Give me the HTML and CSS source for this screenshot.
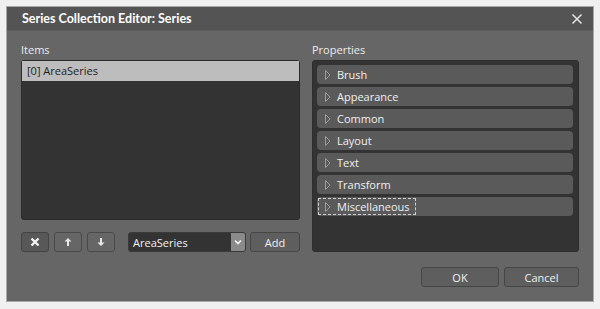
FILE: index.html
```html
<!DOCTYPE html>
<html lang="en">
<head>
<meta charset="UTF-8">
<meta name="viewport" content="width=device-width, initial-scale=1.0">
<title>Series Collection Editor</title>
<link rel="stylesheet" href="styles.css">
</head>
<body>
<div class="dialog">
    <div class="titlebar">
        <span class="title">Series Collection Editor: Series</span>
        <svg class="close" width="12" height="12" viewBox="0 0 12 12">
            <path d="M1.5 1.5 L10.5 10.5 M10.5 1.5 L1.5 10.5" stroke="#e6e6e6" stroke-width="1.5" fill="none"/>
        </svg>
    </div>

    <div class="content">
        <div class="column left">
            <div class="caption">Items</div>
            <div class="items">
                <div class="item selected">[0] AreaSeries</div>
            </div>
            <div class="toolbar">
                <button class="tool pressed" title="Remove">
                    <svg width="10" height="10" viewBox="0 0 10 10">
                        <path d="M1.5 1.5 L8.5 8.5 M8.5 1.5 L1.5 8.5" stroke="#f2f2f2" stroke-width="2.4" fill="none"/>
                    </svg>
                </button>
                <button class="tool" title="Move up">
                    <svg width="10" height="10" viewBox="0 0 10 10">
                        <path d="M5 1 L8.5 4.5 L6 4.5 L6 9 L4 9 L4 4.5 L1.5 4.5 Z" fill="#e8e8e8"/>
                    </svg>
                </button>
                <button class="tool" title="Move down">
                    <svg width="10" height="10" viewBox="0 0 10 10">
                        <path d="M5 9 L8.5 5.5 L6 5.5 L6 1 L4 1 L4 5.5 L1.5 5.5 Z" fill="#e8e8e8"/>
                    </svg>
                </button>
                <div class="combo">
                    <span class="combo-text">AreaSeries</span>
                    <span class="combo-arrow">
                        <svg width="8" height="6" viewBox="0 0 8 6">
                            <path d="M1 1.5 L4 4.5 L7 1.5" stroke="#f4f4f4" stroke-width="1.6" fill="none"/>
                        </svg>
                    </span>
                </div>
                <button class="btn add">Add</button>
            </div>
        </div>

        <div class="column right">
            <div class="caption">Properties</div>
            <div class="properties">
                <div class="category"><svg class="expander" width="6" height="10" viewBox="0 0 6 10"><path d="M0.5 0.5 L5 5 L0.5 9.5 Z" stroke="#9c9c9c" fill="none"/></svg><span class="label">Brush</span></div>
                <div class="category"><svg class="expander" width="6" height="10" viewBox="0 0 6 10"><path d="M0.5 0.5 L5 5 L0.5 9.5 Z" stroke="#9c9c9c" fill="none"/></svg><span class="label">Appearance</span></div>
                <div class="category"><svg class="expander" width="6" height="10" viewBox="0 0 6 10"><path d="M0.5 0.5 L5 5 L0.5 9.5 Z" stroke="#9c9c9c" fill="none"/></svg><span class="label">Common</span></div>
                <div class="category"><svg class="expander" width="6" height="10" viewBox="0 0 6 10"><path d="M0.5 0.5 L5 5 L0.5 9.5 Z" stroke="#9c9c9c" fill="none"/></svg><span class="label">Layout</span></div>
                <div class="category"><svg class="expander" width="6" height="10" viewBox="0 0 6 10"><path d="M0.5 0.5 L5 5 L0.5 9.5 Z" stroke="#9c9c9c" fill="none"/></svg><span class="label">Text</span></div>
                <div class="category"><svg class="expander" width="6" height="10" viewBox="0 0 6 10"><path d="M0.5 0.5 L5 5 L0.5 9.5 Z" stroke="#9c9c9c" fill="none"/></svg><span class="label">Transform</span></div>
                <div class="category"><span class="focus"><svg class="expander" width="6" height="10" viewBox="0 0 6 10"><path d="M0.5 0.5 L5 5 L0.5 9.5 Z" stroke="#9c9c9c" fill="none"/></svg><span class="label">Miscellaneous</span></span></div>
            </div>
        </div>
    </div>

    <div class="footer">
        <button class="btn ok">OK</button>
        <button class="btn cancel">Cancel</button>
    </div>
</div>
</body>
</html>
```

FILE: styles.css
```css
body {
    margin: 0;
    background-color: #f0f0f0;
    font-family: "Open Sans", "Noto Sans", sans-serif;
    font-size: 11px;
    color: #f0f0f0;
}
.dialog {
    margin: 6px 0 0 6px;
    width: 586px;
    height: 294px;
    border: 1px solid #a8a8a8;
    background-color: #666666;
    display: flex;
    flex-direction: column;
}
.titlebar {
    height: 24px;
    background-color: #545454;
    border-bottom: 1px solid #5c5c5c;
    display: flex;
    align-items: center;
    justify-content: space-between;
    padding: 0 10px 0 15px;
    box-sizing: border-box;
}
.title {
    font-family: Lato, "Open Sans", sans-serif;
    font-weight: bold;
    font-size: 12.5px;
    color: #ffffff;
}
.close {
    display: block;
}
.content {
    display: grid;
    grid-template-columns: 279px 267px;
    column-gap: 12px;
    padding: 10px 14px 0 14px;
}
.column {
    display: flex;
    flex-direction: column;
}
.caption {
    height: 19px;
    line-height: 17px;
    color: #ececec;
}
.items {
    height: 158px;
    background-color: #333333;
    border: 1px solid #2b2b2b;
    border-radius: 3px;
}
.item {
    height: 20px;
    line-height: 20px;
    padding-left: 5px;
}
.item.selected {
    background-color: #bdbdbd;
    color: #1e1e1e;
}
.toolbar {
    display: flex;
    margin-top: 12px;
    height: 20px;
}
.tool {
    width: 28px;
    height: 20px;
    margin-right: 5px;
    padding: 0;
    background-color: #666666;
    border: 1px solid #4a4a4a;
    border-radius: 3px;
    display: flex;
    align-items: center;
    justify-content: center;
}
.tool.pressed {
    background-color: #585858;
    border-color: #444444;
}
.combo {
    margin-left: 8px;
    width: 118px;
    height: 20px;
    box-sizing: border-box;
    background-color: #333333;
    border: 1px solid #3a3a3a;
    border-radius: 3px;
    display: flex;
    align-items: center;
    justify-content: space-between;
    overflow: hidden;
}
.combo-text {
    padding-left: 4px;
    color: #f2f2f2;
}
.combo-arrow {
    width: 14px;
    height: 18px;
    background-color: #8a8a8a;
    display: flex;
    align-items: center;
    justify-content: center;
}
.btn {
    height: 20px;
    padding: 0;
    font-family: inherit;
    font-size: 11px;
    color: #f0f0f0;
    background-color: #5e5e5e;
    border: 1px solid #464646;
    border-radius: 3px;
}
.add {
    margin-left: 4px;
    flex: 1;
}
.properties {
    height: 186px;
    background-color: #333333;
    border: 1px solid #2e2e2e;
    border-radius: 3px;
    padding: 4px 5px 0 4px;
}
.category {
    height: 19px;
    margin-bottom: 3px;
    background-color: #5a5a5a;
    border-radius: 4px;
    display: flex;
    align-items: center;
}
.focus {
    display: flex;
    align-items: center;
    height: 15px;
    margin-left: 1px;
    padding-right: 5px;
    border: 1px dashed #d0d0d0;
}
.focus .expander {
    margin-left: 6px;
}
.expander {
    display: block;
    margin-left: 8px;
    flex: none;
}
.label {
    margin-left: 6px;
    color: #f0f0f0;
}
.footer {
    display: flex;
    justify-content: flex-end;
    gap: 5px;
    padding: 15px 14px 0 0;
}
.ok {
    width: 78px;
}
.cancel {
    width: 75px;
}
```
